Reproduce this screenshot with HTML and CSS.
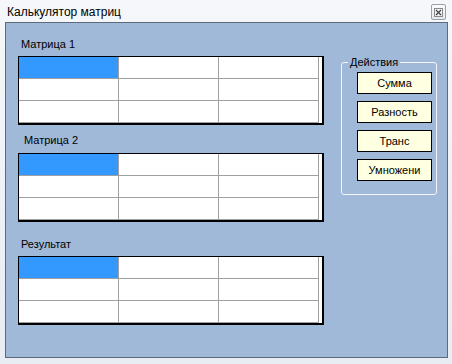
FILE: index.html
```html
<!DOCTYPE html>
<html lang="ru">
<head>
  <meta charset="UTF-8">
  <title>Калькулятор матриц</title>
  <link rel="stylesheet" href="styles.css">
</head>
<body>

  <div class="window">
    <div class="titlebar">
      <span class="title">Калькулятор матриц</span>
      <button class="close" title="Закрыть">
        <svg width="9" height="9" viewBox="0 0 9 9"><rect x="0.5" y="0.5" width="8" height="8" fill="none" stroke="#8a8a8a"/><path d="M2 2L7 7M7 2L2 7" stroke="#444" stroke-width="1.2"/></svg>
      </button>
    </div>

    <div class="client">
      <div class="matrices">
        <div class="section">
          <div class="caption">Матрица 1</div>
          <div class="grid">
            <div class="cell sel"></div><div class="cell"></div><div class="cell"></div>
            <div class="cell"></div><div class="cell"></div><div class="cell"></div>
            <div class="cell"></div><div class="cell"></div><div class="cell"></div>
          </div>
        </div>

        <div class="section second">
          <div class="caption shifted">Матрица 2</div>
          <div class="grid">
            <div class="cell sel"></div><div class="cell"></div><div class="cell"></div>
            <div class="cell"></div><div class="cell"></div><div class="cell"></div>
            <div class="cell"></div><div class="cell"></div><div class="cell"></div>
          </div>
        </div>

        <div class="section third">
          <div class="caption">Результат</div>
          <div class="grid">
            <div class="cell sel"></div><div class="cell"></div><div class="cell"></div>
            <div class="cell"></div><div class="cell"></div><div class="cell"></div>
            <div class="cell"></div><div class="cell"></div><div class="cell"></div>
          </div>
        </div>
      </div>

      <fieldset class="actions">
        <legend>Действия</legend>
        <button class="btn">Сумма</button>
        <button class="btn">Разность</button>
        <button class="btn">Транс</button>
        <button class="btn">Умножени</button>
      </fieldset>
    </div>
  </div>

</body>
</html>
```

FILE: styles.css
```css
body{margin:0;font-family:"Liberation Sans",Arial,sans-serif;color:#000}
.window{
  width:452px;height:364px;box-sizing:border-box;
  background:linear-gradient(#f5f7fa,#e8edf3);
  display:flex;flex-direction:column;
}
.titlebar{height:22px;display:flex;align-items:flex-start;justify-content:space-between}
.title{font-size:12px;line-height:14px;margin:5px 0 0 7px}
.close{
  width:15px;height:16px;margin:4px 6px 0 0;padding:0;
  border:1px solid #9aa0a8;border-radius:2px;background:linear-gradient(#fbfbfc,#e6e9ee);
  display:flex;align-items:center;justify-content:center;
}
.client{
  margin:0 4px 0 5px;height:336px;box-sizing:border-box;
  border:1px solid #5d6a7c;background:#a0b9d8;
  padding:14px 0 0 12px;display:flex;align-items:flex-start;
}
.matrices{display:flex;flex-direction:column}
.section.second{margin-top:8px}
.section.third{margin-top:15px}
.caption{font-size:11px;line-height:14px;padding-left:3px;margin-bottom:5px}
.caption.shifted{padding-left:6px;margin-bottom:6px}
.grid{
  display:grid;grid-template-columns:repeat(3,100px);grid-auto-rows:22px;
  width:fit-content;background:#fff;padding-right:3px;
  border:1px solid #000;border-right-width:2px;border-bottom-width:2px;
}
.cell{box-sizing:border-box;border-right:1px solid #a0a0a0;border-bottom:1px solid #a0a0a0;background:#fff}
.cell.sel{background:#3399ff}
.actions{
  margin:19px 0 0 17px;padding:3px 4px 13px 6px;width:96px;box-sizing:border-box;
  border:1px solid #f3f6fa;border-radius:3px;
  display:flex;flex-direction:column;gap:7px;
}
.actions legend{font-size:11px;line-height:13px;padding:0 2px;margin-left:0}
.btn{
  width:75px;height:22px;padding:0;margin-left:9px;
  background:#ffffe1;border:1px solid #000;
  font-family:"Liberation Sans",Arial,sans-serif;font-size:11px;color:#000;
}
```
